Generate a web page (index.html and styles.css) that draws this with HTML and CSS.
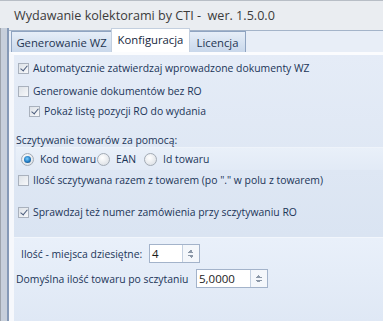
FILE: index.html
```html
<!DOCTYPE html>
<html lang="pl">
<head>
  <meta charset="UTF-8">
  <meta name="viewport" content="width=device-width, initial-scale=1.0">
  <title>Wydawanie kolektorami by CTI</title>
  <link rel="stylesheet" href="styles.css">
</head>
<body>
  <div class="window">
    <div class="titlebar">Wydawanie kolektorami by CTI -&nbsp; wer. 1.5.0.0</div>
    <div class="client">
      <div class="frame"></div>
      <div class="tabctl">
        <div class="tabstrip">
          <div class="tab tab-gen">Generowanie WZ</div>
          <div class="tab active">Konfiguracja</div>
          <div class="tab tab-lic">Licencja</div>
        </div>
        <div class="page">
          <div class="sec-top">
            <div class="row row1">
              <span class="cb checked"></span>
              <span>Automatycznie zatwierdzaj wprowadzone dokumenty WZ</span>
            </div>
            <div class="row row2">
              <span class="cb"></span>
              <span>Generowanie dokumentów bez RO</span>
            </div>
            <div class="row row3">
              <span class="cb checked"></span>
              <span>Pokaż listę pozycji RO do wydania</span>
            </div>
            <div class="group-label">Sczytywanie towarów za pomocą:</div>
            <div class="radio-band">
              <label class="radio r1"><span class="rb selected"></span><span>Kod towaru</span></label>
              <label class="radio r2"><span class="rb"></span><span>EAN</span></label>
              <label class="radio r3"><span class="rb"></span><span>Id towaru</span></label>
            </div>
            <div class="row row4">
              <span class="cb"></span>
              <span>Ilość sczytywana razem z towarem (po "." w polu z towarem)</span>
            </div>
            <div class="row row5">
              <span class="cb checked"></span>
              <span>Sprawdzaj też numer zamówienia przy sczytywaniu RO</span>
            </div>
          </div>
          <div class="sec-bottom">
            <div class="field field1">
              <span class="field-label">Ilość - miejsca dziesiętne:</span>
              <div class="spin small">
                <span class="spin-value">4</span>
                <span class="spin-btn"></span>
              </div>
            </div>
            <div class="field field2">
              <span class="field-label">Domyślna ilość towaru po sczytaniu</span>
              <div class="spin wide">
                <span class="spin-value">5,0000</span>
                <span class="spin-btn"></span>
              </div>
            </div>
          </div>
        </div>
      </div>
    </div>
  </div>
</body>
</html>
```

FILE: styles.css
```css
body {
  margin: 0;
  font-family: "Open Sans", "Noto Sans", sans-serif;
  font-size: 10.4px;
  color: #1b3558;
}
.window {
  width: 383px;
  height: 321px;
  overflow: hidden;
  background: #eaedf1;
  border-top: 1px solid #b8bec6;
  box-sizing: border-box;
}
.titlebar {
  height: 27px;
  line-height: 29px;
  padding-left: 14px;
  font-size: 12.6px;
  color: #3b3b3b;
  white-space: nowrap;
}
.client {
  display: flex;
  height: 293px;
}
.frame {
  width: 9px;
  background: linear-gradient(to right, #9da3ab 0 1px, #c7cfdb 1px 7px, #8599b6 7px 9px);
}
.tabctl {
  flex: 1;
  display: flex;
  flex-direction: column;
}
.tabstrip {
  height: 24px;
  display: flex;
  align-items: flex-end;
  padding-left: 2px;
  background: linear-gradient(to bottom, #eaedf1 0 2px, #a4b4c9 2px 3px, #e8eef7 3px);
}
.tab {
  height: 21px;
  line-height: 22px;
  box-sizing: border-box;
  border: 1px solid #8fa4c1;
  border-bottom: none;
  background: linear-gradient(to bottom, #e6eef8, #c9d8eb);
  font-size: 11.3px;
  color: #1f3552;
  text-align: center;
  white-space: nowrap;
  margin-left: -1px;
}
.tab-gen {
  margin-left: 0;
  width: 101px;
}
.tab.active {
  height: 24px;
  line-height: 21px;
  width: 79px;
  background: #fff;
  border-color: #c3cfdf;
  position: relative;
  z-index: 1;
  color: #15263d;
}
.tab-lic {
  width: 57px;
}
.page {
  flex: 1;
  border-top: 3px solid #fbfcfe;
  border-left: 5px solid #f6f8fc;
  display: flex;
  flex-direction: column;
}
.sec-top {
  height: 182px;
  background: linear-gradient(to bottom, #e5ecf7, #dae4f2);
}
.sec-bottom {
  flex: 1;
  border-top: 1px solid #f2f6fc;
  background: linear-gradient(to bottom, #e9f0fa, #dfe8f5);
}
.row {
  display: flex;
  align-items: center;
  height: 20px;
  padding-left: 4px;
  gap: 4px;
  white-space: nowrap;
}
.row1 {
  height: 26px;
}
.row3 {
  padding-left: 15px;
}
.row5 {
  margin-top: 12px;
}
.group-label {
  margin-top: 12px;
  height: 14px;
  line-height: 14px;
  padding-left: 2px;
}
.radio-band {
  margin-left: 2px;
  height: 23px;
  display: flex;
  align-items: center;
  padding-left: 5px;
  border-top: 1px solid #eef3fa;
  box-sizing: border-box;
  background: linear-gradient(to bottom, #e9f0f9, #e2eaf6);
}
.radio {
  display: flex;
  align-items: center;
  gap: 6px;
  white-space: nowrap;
}
.r1 {
  width: 76px;
}
.r2 {
  width: 47px;
}
.cb {
  width: 11px;
  height: 11px;
  box-sizing: border-box;
  border: 1px solid #a9b1bd;
  background: linear-gradient(135deg, #dde2e8, #f7f8fa);
  flex: none;
  position: relative;
}
.cb.checked::after {
  content: "";
  position: absolute;
  left: 3px;
  top: 0px;
  width: 3px;
  height: 6px;
  border: solid #4b5c7c;
  border-width: 0 1.6px 1.6px 0;
  transform: rotate(40deg);
}
.rb {
  width: 13px;
  height: 13px;
  border-radius: 50%;
  box-sizing: border-box;
  border: 1px solid #a3abb5;
  background: radial-gradient(circle at 40% 35%, #ffffff, #d5dae0);
  flex: none;
  position: relative;
}
.rb.selected::after {
  content: "";
  position: absolute;
  left: 2px;
  top: 2px;
  width: 7px;
  height: 7px;
  border-radius: 50%;
  background: radial-gradient(circle at 45% 40%, #7fd0ff, #1f79c0 55%, #0d2f55);
}
.field {
  display: flex;
  align-items: center;
  white-space: nowrap;
}
.field1 {
  margin-top: 6px;
  padding-left: 7px;
}
.field1 .field-label {
  width: 128px;
}
.field2 {
  margin-top: 6px;
  padding-left: 2px;
}
.field2 .field-label {
  width: 180px;
}
.spin {
  height: 19px;
  display: flex;
  border: 1px solid #a3b3ca;
  background: #fff;
  box-sizing: border-box;
}
.spin.small {
  width: 51px;
}
.spin.wide {
  width: 72px;
}
.spin-value {
  flex: 1;
  padding-left: 2px;
  line-height: 17px;
  font-size: 11.5px;
  color: #1b1b1b;
}
.spin-btn {
  width: 16px;
  border-left: 1px solid #c4d0e0;
  background:
    linear-gradient(to bottom right, transparent 50%, #8c98a8 50%) 5px 5px / 3px 3px no-repeat,
    linear-gradient(to bottom left, transparent 50%, #8c98a8 50%) 8px 5px / 3px 3px no-repeat,
    linear-gradient(to top right, transparent 50%, #8c98a8 50%) 5px 10px / 3px 3px no-repeat,
    linear-gradient(to top left, transparent 50%, #8c98a8 50%) 8px 10px / 3px 3px no-repeat,
    #f4f7fb;
}
```
